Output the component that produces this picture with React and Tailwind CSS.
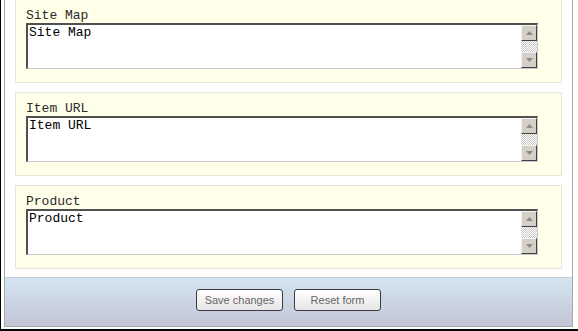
import React from 'react';

const fields = ['Site Map', 'Item URL', 'Product'];

function ScrollButton({ dir }) {
  return (
    <div className="w-4 h-4 bg-[#d4d0c8] border border-t-[#f4f4f0] border-l-[#f4f4f0] border-r-[#404040] border-b-[#404040] flex items-center justify-center">
      <svg width="7" height="4" viewBox="0 0 7 4">
        {dir === 'up' ? (
          <path d="M0 4 L3.5 0 L7 4 Z" fill="#8a8a8a" />
        ) : (
          <path d="M0 0 L3.5 4 L7 0 Z" fill="#8a8a8a" />
        )}
      </svg>
    </div>
  );
}

function FieldPanel({ label }) {
  return (
    <div className="h-[84px] bg-[#ffffea] border border-[#e6e6d4] pl-[10px] pt-[9px]">
      <div className="text-[13px] leading-[14px] text-[#2a2a2a] font-['Liberation_Mono',monospace]">{label}</div>
      <div className="w-[512px] h-[46px] flex bg-white border-t-2 border-l-2 border-t-[#505050] border-l-[#505050] border-b border-r border-b-[#c8c8c8] border-r-[#c8c8c8]">
        <div className="flex-1 pl-px text-[13px] leading-[15px] text-black font-['Liberation_Mono',monospace]">{label}</div>
        <div className="w-4 flex flex-col">
          <ScrollButton dir="up" />
          <div className="flex-1 bg-[repeating-conic-gradient(#c8c8c8_0%_25%,#ffffff_0%_50%)] bg-size-[2px_2px]" />
          <ScrollButton dir="down" />
        </div>
      </div>
    </div>
  );
}

function FormButton({ children }) {
  return (
    <button className="w-[87px] h-[22px] rounded-[3px] border border-[#3c3c3c] bg-gradient-to-b from-white to-[#e6e6e6] text-[11px] text-[#666] font-['Liberation_Sans',Arial,sans-serif]">
      {children}
    </button>
  );
}

export default function App() {
  return (
    <div className="w-[578px] h-[331px] bg-white border-l border-l-black border-b-2 border-b-black overflow-hidden">
      <div className="ml-[3px] w-[569px] border-x border-b border-[#a8a8a8] bg-white">
        <div className="-mt-px px-[10px] flex flex-col gap-[9px]">
          {fields.map((f) => (
            <FieldPanel key={f} label={f} />
          ))}
        </div>
        <div className="mt-[8px] h-[49px] border-t border-[#c4ccd8] bg-gradient-to-b from-[#d4e5f1] to-[#c3c5d6] flex justify-center gap-[11px] pt-[11px]">
          <FormButton>Save changes</FormButton>
          <FormButton>Reset form</FormButton>
        </div>
      </div>
    </div>
  );
}
